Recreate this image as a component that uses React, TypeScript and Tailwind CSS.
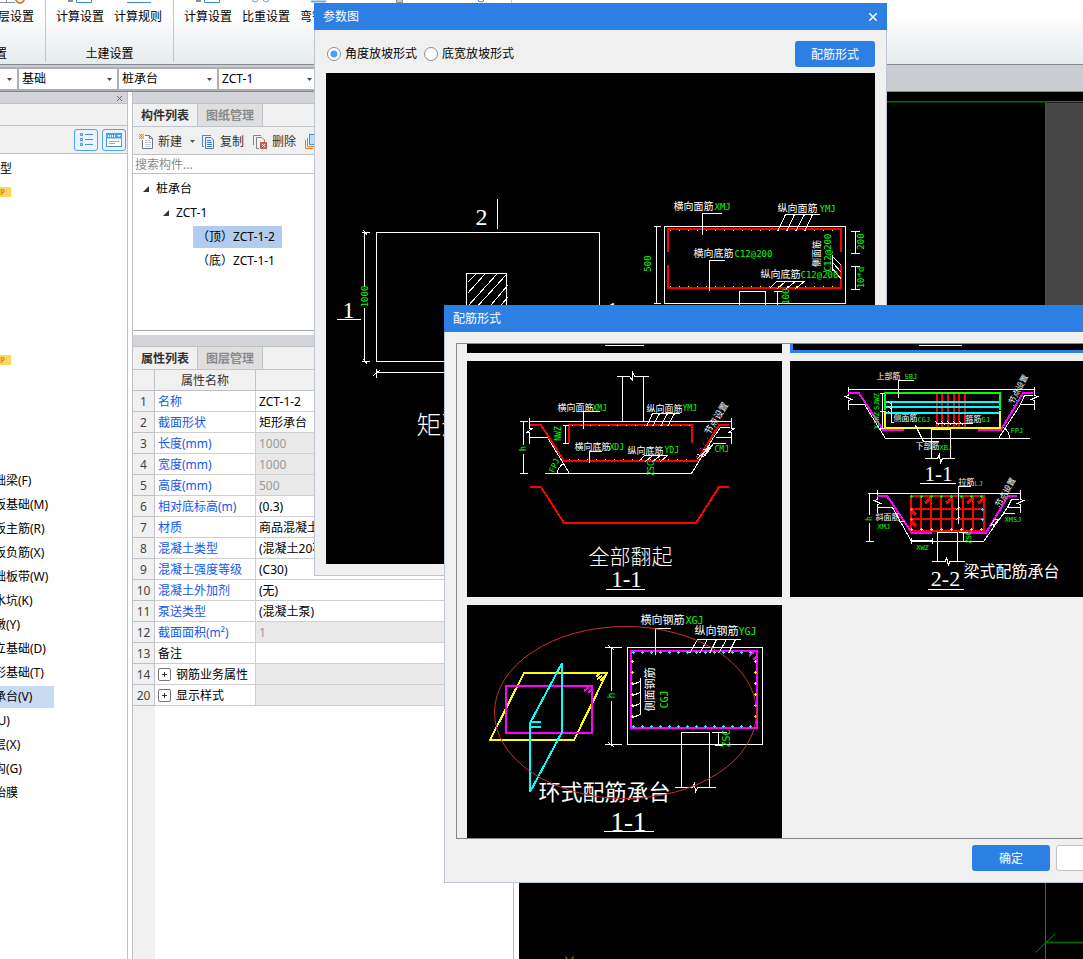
import React from "react";

const mono = "'DejaVu Sans Mono', 'Noto Sans CJK SC', monospace";
const serif = "'Liberation Serif', 'Noto Sans CJK SC', serif";
const GREEN = "#00ff00";

type LabelProps = {
  x: number;
  y: number;
  size?: number;
  fill?: string;
  rotate?: number;
  middle?: boolean;
  font?: string;
  weight?: number;
  children: React.ReactNode;
};

const Label = ({
  x,
  y,
  size = 9,
  fill = "#fff",
  rotate,
  middle,
  font = mono,
  weight = 400,
  children,
}: LabelProps) => (
  <text
    x={x}
    y={y}
    fontSize={size}
    fontFamily={font}
    fontWeight={weight}
    fill={fill}
    stroke="none"
    dominantBaseline="central"
    textAnchor={middle ? "middle" : "start"}
    transform={rotate ? `rotate(${rotate} ${x} ${y})` : undefined}
  >
    {children}
  </text>
);

// two pixel thick rebar, moved onto the pixel grid
const Bar = ({ d, color, width = 2 }: { d: string; color: string; width?: number }) => (
  <path d={d} stroke={color} strokeWidth={width} transform="translate(-0.5 -0.5)" />
);

type DotsProps = {
  from: number;
  to: number;
  step: number;
  at: number;
  fill: string;
  vertical?: boolean;
  cross?: boolean;
};

const Dots = ({ from, to, step, at, fill, vertical, cross }: DotsProps) => {
  let d = "";
  for (let p = from; p <= to; p += step) {
    const x = vertical ? at : p;
    const y = vertical ? p : at;
    d += `M${x - 0.5} ${y}h1`;
    if (cross) {
      d += `M${x - 1.5} ${y}h3M${x} ${y - 1.5}v3`;
    }
  }
  return <path d={d} stroke={fill} />;
};

type DrawingProps = {
  viewBox: string;
  className: string;
  title: string;
  children: React.ReactNode;
};

const Drawing = ({ viewBox, className, title, children }: DrawingProps) => (
  <svg
    viewBox={viewBox}
    className={className}
    role="img"
    aria-label={title}
    fill="none"
    stroke="#fff"
    shapeRendering="crispEdges"
  >
    {children}
  </svg>
);

const PlanDrawing = () => (
  <Drawing
    viewBox="325.5 72.5 549 491"
    className="block h-[491px] w-[549px] bg-black"
    title="矩形承台"
  >
    <rect x="376" y="232" width="223" height="129" />
    <path d="M364 232V286M364 307V361M361 232H369M363 230L367 235M361 361H369M363 359L367 364" />
    <path d="M376 372H600M373 375L380 369M376 368V377" />
    <path d="M497 198V228M336 319H360M605 319H629" />
    <rect x="466" y="273" width="40" height="40" />
    <path d="M475 274L467 282M484 274L467 293M496 274L467 306M506 274L474 309M507 285L485 311M507 297L497 309" />
    <Label x={364} y={296} fill={GREEN} rotate={-90} middle>
      1000
    </Label>
    <Label x={475} y={216} size={24} font={serif}>
      2
    </Label>
    <Label x={342} y={309} size={24} font={serif}>
      1
    </Label>
    <Label x={606} y={309} size={24} font={serif}>
      1
    </Label>
    <Label x={416} y={425} size={25} font={serif} weight={300}>
      矩形承台
    </Label>

    <rect x="664" y="226" width="181" height="77" />
    <Bar d="M668 252V229H841V252M668 265V288H841V265" color="#f00" />
    <Dots from={670} to={838} step={9} at={230} fill="#ff0" />
    <Dots from={670} to={838} step={9} at={286} fill="#ff0" />
    <path d="M721 213H702V234M724 260H709V290" />
    <path d="M785 214H819M785 214L777 231M794 214L786 231M804 214L795 231M812 214L804 231" />
    <path d="M776 281H804M776 281L769 288M785 281L777 288M795 281L786 288M804 281L795 288" />
    <path d="M832 254V270M832 256L841 265M832 262L841 272M832 268L841 279" />
    <path d="M656 226V303M653 226H660M653 303H660" />
    <path d="M855 231V253M850 231H859M850 253H859M855 266V289M850 266H859M850 289H859" />
    <path d="M739 304V291H765V304M777 291V304M773 291H781" />
    <Label x={673} y={206} size={10}>
      横向面筋
    </Label>
    <Label x={714} y={206} fill={GREEN}>
      XMJ
    </Label>
    <Label x={777} y={208} size={10}>
      纵向面筋
    </Label>
    <Label x={819} y={208} fill={GREEN}>
      YMJ
    </Label>
    <Label x={693} y={253} size={10}>
      横向底筋
    </Label>
    <Label x={734} y={253} fill={GREEN}>
      C12@200
    </Label>
    <Label x={760} y={274} size={10}>
      纵向底筋
    </Label>
    <Label x={800} y={274} fill={GREEN}>
      C12@200
    </Label>
    <Label x={816} y={253} rotate={-90} middle>
      侧面筋
    </Label>
    <Label x={827} y={252} fill={GREEN} rotate={-90} middle>
      C12@200
    </Label>
    <Label x={647} y={263} fill={GREEN} rotate={-90} middle>
      500
    </Label>
    <Label x={860} y={241} fill={GREEN} rotate={-90} middle>
      200
    </Label>
    <Label x={860} y={277} fill={GREEN} rotate={-90} middle>
      10*d
    </Label>
    <Label x={785} y={296} fill={GREEN} rotate={-90} middle>
      100
    </Label>
  </Drawing>
);

const TurnUpDrawing = () => (
  <Drawing
    viewBox="466.5 360.5 315 236"
    className="block h-[236px] w-[315px]"
    title="全部翻起"
  >
    <path d="M622 421V376M643 421V376M616 376H629L632 380V371L634 376H648" />
    <path d="M529 421H731M529 417V428L532 428L526 432L529 432V443M529 437H547L569 473M544 473H691L713 437L720 427H729M715 437H731M731 417V428L734 428L728 432L731 432V443" />
    <Bar
      d="M530 425H541L564 461H697L719 425H729M569 443V425H692V443M530 487H541L564 523H696L719 487H729"
      color="#f00"
    />
    <Dots from={572} to={690} step={9} at={425} fill="#ff0" />
    <Dots from={569} to={692} step={9} at={459} fill="#ff0" />
    <path d="M523 421V444M523 453V473M519 421H527M519 473H527" />
    <path d="M599 411H583V428M601 451H589V462" />
    <path d="M652 413H679M652 413L646 426M659 413L652 426M667 413L660 426M674 413L667 426" />
    <path d="M644 455H667M644 455L638 461M652 455L645 461M660 455L652 461M667 455L660 461" />
    <path d="M565 425V443M562 425H568M562 443H568" />
    <path d="M557 473Q557 467 563 463" />
    <path d="M713 443H725M713 443L704 456M713 443L697 458" />
    <path d="M702 449L708 449L703 456L697 454M709 445L712 447" />
    <path d="M695 456h1M699 448h1M702 443h1M706 438h1" stroke="#f0f" />
    <Label x={522} y={448} fill={GREEN} rotate={-90} middle>
      h
    </Label>
    <Label x={592} y={408} size={8} fill={GREEN}>
      XMJ
    </Label>
    <Label x={557} y={407}>横向面筋</Label>
    <Label x={682} y={408} size={8} fill={GREEN}>
      YMJ
    </Label>
    <Label x={646} y={408}>纵向面筋</Label>
    <Label x={558} y={433} size={8} fill={GREEN} rotate={-90} middle>
      NWZ
    </Label>
    <Label x={609} y={447} size={8} fill={GREEN}>
      XDJ
    </Label>
    <Label x={574} y={446}>横向底筋</Label>
    <Label x={664} y={450} size={8} fill={GREEN}>
      YDJ
    </Label>
    <Label x={627} y={450}>纵向底筋</Label>
    <Label x={716} y={418} rotate={-58} middle>
      节点设置
    </Label>
    <Label x={714} y={449} size={8} fill={GREEN}>
      CMJ
    </Label>
    <Label x={554} y={465} size={8} fill={GREEN} rotate={-68} middle>
      FPJ
    </Label>
    <Label x={651} y={468} size={8} fill={GREEN} rotate={-90} middle>
      ZSC
    </Label>
    <Label x={630} y={556} size={21} font={serif} weight={300} middle>
      全部翻起
    </Label>
    <Label x={626} y={579} size={23} font={serif} middle>
      1-1
    </Label>
    <path d="M605 589H644" />
  </Drawing>
);

const BeamDrawing = () => (
  <Drawing
    viewBox="789.5 360.5 315 236"
    className="block h-[236px] w-[315px]"
    title="梁式配筋承台"
  >
    <path d="M848 389H1034M848 386V395L845 396L851 399L848 400V409M848 404H864L885 438H1029M998 438L1020 404H1034M1020 404L1024 395H1032M1034 386V395L1037 396L1031 399L1034 400V409" />
    <Bar d="M848 393H859L883 430H904M978 430H1001L1023 393H1033" color="#f0f" />
    <Bar
      d="M937 393V427M942 393V427M948 393V427M954 393V427M959 393V427M965 393V427"
      color="#f00"
    />
    <Bar d="M885 402H1000M885 407H1000M885 413H1000" color="#0ff" />
    <Bar d="M885 411V428H1000V411" color="#ff0" />
    <Bar d="M885 410V393H1000V410" color="#0f0" />
    <path d="M935 423H972M935 421L939 425M941 421L945 425M947 421L951 425M953 421L957 425M959 421L963 425" />
    <path d="M913 380H898V397M893 422H891V401M888 401L892 405M888 406L892 410M888 411L892 415M915 425L923 441H938" />
    <path d="M882 393V428M879 393H884M879 411H884M879 428H884" />
    <path d="M931 458V429H950V458M924 458H937L939 454L940 462L942 458H954" />
    <path d="M1003 427Q1009 431 1009 438" />
    <path d="M1003 421L1018 396" stroke="#0ff" strokeDasharray="1 5" />
    <Label x={876} y={376} size={8}>
      上部筋
    </Label>
    <Label x={904} y={376} size={7} fill={GREEN}>
      SBJ
    </Label>
    <Label x={893} y={418} size={8}>
      侧面筋
    </Label>
    <Label x={917} y={419} size={7} fill={GREEN}>
      CGJ
    </Label>
    <Label x={965} y={419} size={8}>
      箍筋
    </Label>
    <Label x={981} y={419} size={7} fill={GREEN}>
      GJ
    </Label>
    <Label x={915} y={446} size={8}>
      下部筋
    </Label>
    <Label x={939} y={447} size={7} fill={GREEN}>
      XBJ
    </Label>
    <Label x={876} y={401} size={7} fill={GREEN} rotate={-90} middle>
      SJWZ
    </Label>
    <Label x={876} y={420} size={7} fill={GREEN} rotate={-90} middle>
      XJWZ
    </Label>
    <Label x={1018} y={389} size={8} rotate={-62} middle>
      节点设置
    </Label>
    <Label x={1010} y={430} size={7} fill={GREEN}>
      FPJ
    </Label>
    <Label x={938} y={473} size={21} font={serif} middle>
      1-1
    </Label>
    <path d="M919 483H955" />

    <path d="M867 493H1020M877 489V499L874 500L880 503L877 504V512M877 507H892L911 541H983L1007 507H1020M1007 507L1011 499H1018M1020 489V499L1023 500L1017 503L1020 504V512" />
    <Bar
      d="M877 496H887L912 533H932M962 533H986L1008 496H1017"
      color="#f0f"
    />
    <Bar
      d="M911 496H984V531H911ZM921 496V531M931 496V531M941 496V531M952 496V531M963 496V531M973 496V531M911 509H984M911 519H984"
      color="#f00"
    />
    <Bar
      d="M925 503L931 498M946 503L952 498M967 503L973 498M978 503L984 498M911 510L916 515M911 521L916 526"
      color="#f00"
      width={3}
    />
    <Dots from={911} to={984} step={10} at={496} fill="#0f0" cross />
    <Dots from={911} to={984} step={10} at={529} fill="#ff0" cross />
    <Dots from={509} to={520} step={10} at={911} fill="#0ff" vertical cross />
    <Dots from={509} to={520} step={10} at={982} fill="#0ff" vertical cross />
    <path d="M869 493V514M869 522V541M865 541H873M970 486H958V523M956 509L960 506M956 519L960 516" />
    <path d="M1014 513H1004L992 526M998 519L994 519L990 525L996 523M898 521H904M911 540H932M911 537V543M932 537V543M963 532V541M958 532H967" />
    <path d="M937 561V532H957V561M931 561H945L946 557L948 565L949 561H964" />
    <path d="M989 522L1004 498" stroke="#0ff" strokeDasharray="1 5" />
    <Label x={869} y={518} size={8} fill={GREEN} rotate={-90} middle>
      h
    </Label>
    <Label x={875} y={517} size={8}>
      斜面筋
    </Label>
    <Label x={877} y={526} size={7} fill={GREEN}>
      XMJ
    </Label>
    <Label x={958} y={482} size={8}>
      拉筋
    </Label>
    <Label x={974} y={483} size={7} fill={GREEN}>
      LJ
    </Label>
    <Label x={1004} y={519} size={7} fill={GREEN}>
      XMSJ
    </Label>
    <Label x={922} y={547} size={7} fill={GREEN} middle>
      XWZ
    </Label>
    <Label x={968} y={537} size={7} fill={GREEN} rotate={-90} middle>
      ZSC
    </Label>
    <Label x={1005} y={492} size={8} rotate={-60} middle>
      节点设置
    </Label>
    <Label x={945} y={578} size={22} font={serif} middle>
      2-2
    </Label>
    <path d="M927 589H963" />
    <Label x={963} y={571} size={16}>
      梁式配筋承台
    </Label>
  </Drawing>
);

const RingDrawing = () => (
  <Drawing
    viewBox="466.5 604.5 315 236"
    className="block h-[236px] w-[315px]"
    title="环式配筋承台"
  >
    <Bar d="M524 673H607L574 740H490Z" color="#ff0" />
    <Bar d="M606 675L600 681M602 676L597 679M599 674L596 677" color="#ff0" />
    <Bar d="M506 686H592V733H506Z" color="#f0f" />
    <Bar d="M584 691L589 687M588 693L592 689" color="#f0f" />
    <Bar d="M562 663V732L530 792V723Z" color="#0ff" />
    <Bar d="M530 722H541M530 727H541" color="#0ff" />

    <rect x="627" y="647" width="135" height="97" />
    <Bar d="M631 651H757V728H631Z" color="#f0f" />
    <Bar d="M749 656L754 652M753 660L757 656" color="#f0f" />
    <Dots from={633} to={755} step={9} at={652} fill="#0ff" cross />
    <Dots from={633} to={755} step={9} at={726} fill="#0ff" cross />
    <Dots from={661} to={720} step={11} at={632} fill="#ff0" vertical cross />
    <Dots from={661} to={720} step={11} at={755} fill="#ff0" vertical cross />
    <path d="M611 647V690M611 700V744M604 647H621M604 744H621M608 645L614 650M608 742L614 747" />
    <path d="M670 628H655V654" />
    <path d="M697 639H740M697 639L689 653M707 639L699 653M716 639L709 653M726 639L718 653M735 639L728 653" />
    <path d="M640 677V714M640 681L632 684M640 692L632 695M640 703L632 706M640 714L632 717" />
    <path d="M681 787V732H709V787M674 787H692L694 783L695 792L697 787H715M718 732V745M711 732H726M714 745H722" />
    <Label x={640} y={620} size={11}>
      横向钢筋
    </Label>
    <Label x={685} y={620} size={10} fill={GREEN}>
      XGJ
    </Label>
    <Label x={694} y={631} size={11}>
      纵向钢筋
    </Label>
    <Label x={738} y={631} size={10} fill={GREEN}>
      YGJ
    </Label>
    <Label x={650} y={689} size={11} rotate={-90} middle>
      侧面钢筋
    </Label>
    <Label x={664} y={699} size={10} fill={GREEN} rotate={-90} middle>
      CGJ
    </Label>
    <Label x={611} y={695} size={10} fill={GREEN} rotate={-90} middle>
      h
    </Label>
    <Label x={726} y={738} size={10} fill={GREEN} rotate={-90} middle>
      ZSC
    </Label>
    <Label x={604} y={792} size={22} middle>
      环式配筋承台
    </Label>
    <Label x={628} y={821} size={27} font={serif} middle>
      1-1
    </Label>
    <path d="M603 831H653" />
    <ellipse
      cx="625"
      cy="712"
      rx="131"
      ry="86"
      stroke="#c83232"
      shapeRendering="auto"
    />
  </Drawing>
);

const ribbonIcons = {
  calc: (
    <>
      <path d="M12 1H17" stroke="#8a8f96" strokeWidth="2" />
      <path d="M20.500 0V2.500H35.500V0" stroke="#3f87d4" />
    </>
  ),
  rule: <path d="M13 2.500H37" stroke="#3f87d4" />,
  weight: (
    <>
      <circle cx="13" cy="-1" r="3" stroke="#6fa8dc" />
      <circle cx="24" cy="-1" r="3" stroke="#6fa8dc" />
    </>
  ),
  hook: <path d="M11 1.500H26" stroke="#6fa8dc" strokeWidth="2" />,
  floor: (
    <>
      <path d="M12 2.500H29M20.500 0V2" stroke="#8a8f96" />
      <circle cx="34" cy="-1" r="4" stroke="#e0782f" strokeWidth="2" />
    </>
  ),
};

const RibbonButton = ({
  icon,
  label,
}: {
  icon: keyof typeof ribbonIcons;
  label: string;
}) => (
  <button type="button" className="flex w-12 shrink-0 flex-col items-center gap-[5px]">
    <svg width="48" height="4" fill="none" aria-hidden="true">
      {ribbonIcons[icon]}
    </svg>
    <span className="whitespace-nowrap leading-4">{label}</span>
  </button>
);

const Ribbon = () => (
  <div className="flex h-[65px] shrink-0 border-b border-[#83888e] bg-linear-to-b from-white from-20% to-[#e6ebec]">
    <div className="flex h-[62px] w-[46px] flex-col items-end justify-between border-r border-[#c3c6ca] pr-[11px]">
      <RibbonButton icon="floor" label="楼层设置" />
      <span className="mr-[27px] whitespace-nowrap leading-4">基本设置</span>
    </div>
    <div className="flex h-[62px] w-32 flex-col items-center justify-between border-r border-[#c3c6ca]">
      <div className="flex gap-[10px] pr-px">
        <RibbonButton icon="calc" label="计算设置" />
        <RibbonButton icon="rule" label="计算规则" />
      </div>
      <span className="leading-4">土建设置</span>
    </div>
    <div className="flex h-[62px] w-[338px] gap-[10px] border-r border-[#c3c6ca] pl-[10px]">
      <RibbonButton icon="calc" label="计算设置" />
      <RibbonButton icon="weight" label="比重设置" />
      <RibbonButton icon="hook" label="弯钩设置" />
      <svg width="140" height="4" fill="none" className="ml-9" aria-hidden="true">
        <path d="M2.500 0V2.500H8.500V0" fill="#c4c8cc" stroke="#8a8f96" />
        <circle cx="87" cy="-1" r="3" stroke="#3f87d4" />
      </svg>
    </div>
  </div>
);

const Combo = ({ label, value }: { label: string; value: string }) => (
  <label className="relative flex w-[100px] shrink-0 border-l-2 border-[#aeb0b3]">
    <span className="sr-only">{label}</span>
    <select className="w-full appearance-none bg-white pl-[3px] text-black outline-none">
      <option>{value}</option>
    </select>
    <svg
      width="5"
      height="3"
      className="pointer-events-none absolute right-[5px] top-[9px]"
      aria-hidden="true"
    >
      <path d="M0 0H5L2.500 3Z" fill="#444" />
    </svg>
  </label>
);

const ComboBar = () => (
  <div className="flex h-[27px] shrink-0 border-b border-[#83858a] bg-[#c9ccd1] pt-[2px]">
    <div className="flex h-6 border-y-2 border-[#aeb0b3]">
      <div className="-ml-[83px] flex">
        <Combo label="楼层" value="基础层" />
        <Combo label="构件类别" value="基础" />
        <Combo label="构件类型" value="桩承台" />
        <Combo label="构件名称" value="ZCT-1" />
      </div>
    </div>
  </div>
);

// one entry per tree row, null rows are empty
const moduleRows: (string | null)[] = [
  "常用类型",
  "badge",
  null,
  null,
  null,
  null,
  null,
  null,
  "badge",
  null,
  null,
  null,
  null,
  "基础梁(F)",
  "筏板基础(M)",
  "筏板主筋(R)",
  "筏板负筋(X)",
  "基础板带(W)",
  "集水坑(K)",
  "柱墩(Y)",
  "独立基础(D)",
  "异形基础(T)",
  "桩承台(V)",
  "桩(U)",
  "垫层(X)",
  "地沟(G)",
  "砖胎膜",
];

const ModuleRow = ({ row }: { row: string | null }) => {
  if (!row) return null;
  if (row === "badge") {
    return (
      <span className="mb-[2px] flex h-[10px] w-[11px] items-center bg-[#ffd75e] text-[8px] font-bold leading-none text-[#c9951c]">
        P
      </span>
    );
  }
  if (row === "常用类型") return <span className="-ml-9">{row}</span>;
  return (
    <span
      className={
        row === "桩承台(V)"
          ? "flex h-[22px] w-[54px] items-center bg-[#c8daf1]"
          : "flex h-[22px] items-center"
      }
    >
      <span className="-ml-[18px]">{row}</span>
    </span>
  );
};

const ModulePanel = () => (
  <aside className="flex w-32 shrink-0 flex-col overflow-hidden border-r border-[#bfc1c5] bg-white">
    <div className="flex h-3 shrink-0 items-center justify-end border-b border-[#bfc1c5] bg-[#d2d4d9] pr-1 pt-px">
      <button type="button" aria-label="关闭">
        <svg width="7" height="7" aria-hidden="true">
          <path d="M1 1L6 6M6 1L1 6" stroke="#666" />
        </svg>
      </button>
    </div>
    <div className="h-[22px] shrink-0 border-b border-[#bfc1c5] bg-[#f0f0f0]" />
    <div className="flex h-7 shrink-0 items-center justify-end gap-1 border-b border-[#bfc1c5] bg-[#f0f0f0] pr-px">
      <button
        type="button"
        aria-label="列表视图"
        className="flex h-[22px] w-6 items-center justify-center rounded-[3px] border border-[#4fa3f3] bg-[#e8f3fe]"
      >
        <svg width="14" height="14" fill="none" aria-hidden="true">
          <path d="M1.500 0.500H3.500V2.500H1.500ZM1.500 5.500H3.500V7.500H1.500ZM1.500 10.500H3.500V12.500H1.500Z" stroke="#4b8fd8" />
          <path d="M6 1.500H14M6 6.500H14M6 11.500H14" stroke="#4b8fd8" />
        </svg>
      </button>
      <button
        type="button"
        aria-label="窗口视图"
        className="flex h-[22px] w-6 items-center justify-center rounded-[3px] border border-[#4fa3f3] bg-[#e8f3fe]"
      >
        <svg width="16" height="14" fill="none" aria-hidden="true">
          <rect x="0.500" y="0.500" width="15" height="13" fill="#fff" stroke="#4b8fd8" />
          <path d="M0 3H16" stroke="#4ba0f5" strokeWidth="5" />
          <path d="M2 3H9" stroke="#fff" strokeDasharray="1 1" strokeWidth="2" />
          <path d="M11 2H15L13 4Z" fill="#fff" />
          <path d="M3 8.500H13M3 10.500H9" stroke="#7bb4f0" />
        </svg>
      </button>
    </div>
    <ul className="pt-[3px]">
      {moduleRows.map((row, i) => (
        <li key={i} className="flex h-6 items-center whitespace-nowrap">
          <ModuleRow row={row} />
        </li>
      ))}
    </ul>
  </aside>
);

const Tabs = ({ active, other }: { active: string; other: string }) => (
  <>
    <div className="h-3 shrink-0 border-b border-[#bfc1c5] bg-[#d2d4d9]" />
    <div className="flex h-[23px] shrink-0 border-b border-[#bfc3ca] bg-[#f0f0f0] font-bold">
      <button type="button" className="w-16 pt-[2px] text-[#333]">
        {active}
      </button>
      <button
        type="button"
        className="w-[66px] border-x border-[#bfc3ca] bg-[#dfdfdf] pt-[2px] text-[#8a8a8a]"
      >
        {other}
      </button>
    </div>
  </>
);

const Twisty = () => (
  <svg width="7" height="7" aria-hidden="true">
    <path d="M6 0V6H0Z" fill="#333" />
  </svg>
);

const ComponentList = () => (
  <section className="flex flex-col">
    <Tabs active="构件列表" other="图纸管理" />
    <div className="flex h-7 items-center border-b border-[#bfc1c5] bg-[#f0f0f0] pl-[6px] pt-[2px] text-[#333]">
      <button type="button" className="flex items-center gap-1">
        <svg width="15" height="16" fill="none" aria-hidden="true">
          <path d="M3.500 6V14.500H13.500V4.500L10.500 1.500H6" fill="#fff" stroke="#6b7a88" />
          <path d="M10.500 1.500V4.500H13.500" stroke="#6b7a88" />
          <path d="M6 6.500H11M6 8.500H12M6 10.500H12M6 12.500H12" stroke="#c6ccd2" />
          <rect width="5" height="5" fill="#f7d9a8" />
          <path d="M0 0.500H5M0 2.500H5M0 4.500H5" stroke="#e8902a" strokeDasharray="1 1" />
          <path d="M1 1.500H5M1 3.500H5" stroke="#e8902a" strokeDasharray="1 1" />
        </svg>
        新建
        <svg width="5" height="3" className="ml-1" aria-hidden="true">
          <path d="M0 0H5L2.500 3Z" fill="#555" />
        </svg>
      </button>
      <button type="button" className="ml-[7px] flex items-center gap-1">
        <svg width="14" height="16" fill="none" aria-hidden="true">
          <path d="M9 1.500H0.500V12.500H2" stroke="#4a86c8" />
          <path d="M3.500 3.500H9L11.500 6V14.500H3.500Z" fill="#e3effb" stroke="#3f7fc9" />
          <path d="M5 6.500H9M5 8.500H10M5 10.500H10M5 12.500H10" stroke="#3f7fc9" />
        </svg>
        复制
      </button>
      <button type="button" className="ml-[9px] flex items-center gap-1">
        <svg width="15" height="16" fill="none" aria-hidden="true">
          <path d="M8 1.500H0.500V11" stroke="#7a858f" />
          <path d="M6 14.500H3.500V3.500H9L11.500 6V8" stroke="#7a858f" />
          <rect x="7" y="8" width="7" height="7" fill="#d9534f" />
          <path d="M9 10L12 13M12 10L9 13" stroke="#fff" />
        </svg>
        删除
      </button>
      <button type="button" aria-label="层间复制" className="ml-[9px]">
        <svg width="16" height="16" fill="none" aria-hidden="true">
          <rect x="4.500" y="0.500" width="11" height="10" fill="#bfdcf8" stroke="#4a90d9" />
          <path d="M2.500 4V12.500H10M0.500 6V14.500H8" stroke="#e0782f" />
        </svg>
      </button>
    </div>
    <input
      type="text"
      aria-label="搜索构件"
      placeholder="搜索构件..."
      className="h-[19px] border-b border-[#bfc1c5] bg-white pl-[2px] outline-none placeholder:text-[#8a8a8a]"
    />
    <ul className="h-[157px] border-b border-[#a8aaad] bg-white pt-[3px]">
      <li className="flex h-6 items-center gap-[6px] pl-[10px]">
        <Twisty />
        桩承台
      </li>
      <li className="flex h-6 items-center gap-[6px] pl-[30px]">
        <Twisty />
        ZCT-1
      </li>
      <li className="ml-[60px] flex h-6 items-center">
        <span className="flex h-[22px] w-[89px] items-center whitespace-nowrap bg-[#b1ccee] pl-1">
          （顶）ZCT-1-2
        </span>
      </li>
      <li className="ml-[60px] flex h-6 items-center px-1">（底）ZCT-1-1</li>
    </ul>
  </section>
);

type Property = {
  no: number;
  name: string;
  value?: string;
  plain?: boolean;
  locked?: boolean;
  group?: boolean;
};

const properties: Property[] = [
  { no: 1, name: "名称", value: "ZCT-1-2" },
  { no: 2, name: "截面形状", value: "矩形承台" },
  { no: 3, name: "长度(mm)", value: "1000", locked: true },
  { no: 4, name: "宽度(mm)", value: "1000", locked: true },
  { no: 5, name: "高度(mm)", value: "500", locked: true },
  { no: 6, name: "相对底标高(m)", value: "(0.3)" },
  { no: 7, name: "材质", value: "商品混凝土" },
  { no: 8, name: "混凝土类型", value: "(混凝土20石)" },
  { no: 9, name: "混凝土强度等级", value: "(C30)" },
  { no: 10, name: "混凝土外加剂", value: "(无)" },
  { no: 11, name: "泵送类型", value: "(混凝土泵)" },
  { no: 12, name: "截面面积(m²)", value: "1", locked: true },
  { no: 13, name: "备注", plain: true },
  { no: 14, name: "钢筋业务属性", plain: true, locked: true, group: true },
  { no: 20, name: "显示样式", plain: true, locked: true, group: true },
];

const PropertyList = () => (
  <section className="mt-1 flex min-h-0 flex-1 flex-col">
    <Tabs active="属性列表" other="图层管理" />
    <table className="w-full table-fixed border-separate border-spacing-0 leading-4">
      <colgroup>
        <col className="w-[22px]" />
        <col className="w-[101px]" />
        <col />
      </colgroup>
      <thead>
        <tr className="h-[21px] bg-[#f0f0f0] text-[#333]">
          <th className="border-b border-r border-[#bfc1c5]" />
          <th className="border-b border-r border-[#bfc1c5] pt-[2px] font-normal">属性名称</th>
          <th className="border-b border-[#bfc1c5] pt-[2px] font-normal">属性值</th>
        </tr>
      </thead>
      <tbody>
        {properties.map((p) => (
          <tr key={p.no} className="h-[21px]">
            <td className="border-b border-r border-[#bfc1c5] bg-[#f0f0f0] pt-[2px] text-center text-[#444]">
              {p.no}
            </td>
            <td
              className={
                p.plain
                  ? "whitespace-nowrap border-b border-r border-[#cfcfcf] pl-[3px] pt-[2px]"
                  : "whitespace-nowrap border-b border-r border-[#cfcfcf] pl-[3px] pt-[2px] text-[#1657f0]"
              }
            >
              {p.group ? (
                <span className="flex items-center gap-[5px]">
                  <button
                    type="button"
                    aria-label="展开"
                    className="mb-[2px] flex size-[13px] items-center justify-center rounded-[2px] border border-[#777] bg-white"
                  >
                    <svg width="5" height="5" aria-hidden="true">
                      <path d="M0 2.500H5M2.500 0V5" stroke="#333" />
                    </svg>
                  </button>
                  {p.name}
                </span>
              ) : (
                p.name
              )}
            </td>
            <td
              className={
                p.locked
                  ? "whitespace-nowrap border-b border-[#cfcfcf] bg-[#e9e9e9] pl-[3px] pt-[2px] text-[#9a9a9a]"
                  : "whitespace-nowrap border-b border-[#cfcfcf] pl-[3px] pt-[2px]"
              }
            >
              {p.value}
            </td>
          </tr>
        ))}
      </tbody>
    </table>
    <div className="w-[22px] flex-1 bg-[#f0f0f0]" />
  </section>
);

const ModelView = () => (
  <main className="relative ml-[5px] flex-1 overflow-hidden bg-black">
    <svg
      viewBox="518.5 91.5 564 867"
      className="absolute left-0 top-0 h-[867px] w-[564px]"
      fill="none"
      aria-hidden="true"
    >
      <rect x="1045" y="102" width="60" height="400" fill="#464646" />
      <path d="M519 101H1045" stroke="#006400" />
      <path d="M519 102H1045" stroke="#003c00" />
      <path d="M1045 500V101H1083" stroke="#dc1414" />
      <path d="M1045 800V960" stroke="#009600" />
      <path d="M1045 942H1083" stroke="#006400" strokeWidth="2" />
      <path d="M1035 952L1055 933" stroke="#009600" />
      <path d="M565 956L569 962L573 956" stroke="#00ff00" />
    </svg>
  </main>
);

const ParameterDialog = () => (
  <div
    role="dialog"
    aria-label="参数图"
    className="absolute left-[314px] top-[3px] w-[573px] bg-[#f0f0f0]"
  >
    <div className="flex h-[27px] items-center justify-between bg-[#2d80e3] pl-[9px] pr-[10px] text-white">
      <h2>参数图</h2>
      <button type="button" aria-label="关闭">
        <svg width="8" height="8" aria-hidden="true">
          <path d="M0 0L8 8M8 0L0 8" stroke="#fff" strokeWidth="1.500" />
        </svg>
      </button>
    </div>
    <div className="border-x border-b border-[#bcc5d4] px-[11px] pb-[11px] pt-[11px]">
      <div className="mb-[6px] flex items-center justify-between">
        <div className="flex gap-[7px] pl-px">
          <label className="flex items-center gap-1">
            <input
              type="radio"
              name="slope"
              defaultChecked
              className="size-[14px] appearance-none rounded-full border border-[#8c8c8c] bg-white checked:bg-[radial-gradient(circle,#4a9bfb_3px,#fff_4px)]"
            />
            角度放坡形式
          </label>
          <label className="flex items-center gap-1">
            <input
              type="radio"
              name="slope"
              className="size-[14px] appearance-none rounded-full border border-[#8c8c8c] bg-white checked:bg-[radial-gradient(circle,#4a9bfb_3px,#fff_4px)]"
            />
            底宽放坡形式
          </label>
        </div>
        <button type="button" className="h-[26px] w-20 rounded-[3px] bg-[#2d80e3] pt-px text-white">
          配筋形式
        </button>
      </div>
      <PlanDrawing />
    </div>
  </div>
);

const RebarDialog = () => (
  <div
    role="dialog"
    aria-label="配筋形式"
    className="absolute left-[444px] top-[305px] w-[703px] bg-[#f0f0f0]"
  >
    <div className="flex h-[27px] items-center bg-[#2d80e3] pl-[9px] text-white">
      <h2>配筋形式</h2>
    </div>
    <div className="border-x border-b border-[#bcc5d4] px-[11px] pb-[11px] pt-[11px]">
      <div className="h-[496px] overflow-hidden border border-[#828790] pl-[10px]">
        <div className="-mt-[227px] grid grid-cols-[315px_315px] gap-2">
          <div className="flex h-[236px] items-end justify-center bg-black">
            <div className="mb-[7px] h-px w-[39px] bg-white" />
          </div>
          <div className="flex h-[236px] items-end border-[3px] border-[#2d80e3] bg-black pl-[126px]">
            <div className="mb-1 h-px w-[43px] bg-white" />
          </div>
          <div className="bg-black">
            <TurnUpDrawing />
          </div>
          <div className="bg-black">
            <BeamDrawing />
          </div>
          <div className="bg-black">
            <RingDrawing />
          </div>
        </div>
      </div>
      <div className="mt-[6px] flex justify-end gap-[6px] pr-px">
        <button type="button" className="h-[26px] w-[78px] rounded-[3px] bg-[#2d80e3] pt-[2px] text-white">
          确定
        </button>
        <button type="button" className="h-[26px] w-[78px] rounded-[3px] border border-[#c4c4c4] bg-white">
          取消
        </button>
      </div>
    </div>
  </div>
);

const App = () => {
  return (
    <div className="relative flex h-screen flex-col overflow-hidden bg-white font-['Noto_Sans','Noto_Sans_CJK_SC',sans-serif] text-[12px] leading-4 text-black">
      <Ribbon />
      <ComboBar />
      <div className="flex min-h-0 flex-1">
        <ModulePanel />
        <div className="ml-1 flex w-[382px] shrink-0 flex-col border-x border-[#bfc1c5]">
          <ComponentList />
          <PropertyList />
        </div>
        <ModelView />
      </div>
      <ParameterDialog />
      <RebarDialog />
    </div>
  );
};

export default App;
